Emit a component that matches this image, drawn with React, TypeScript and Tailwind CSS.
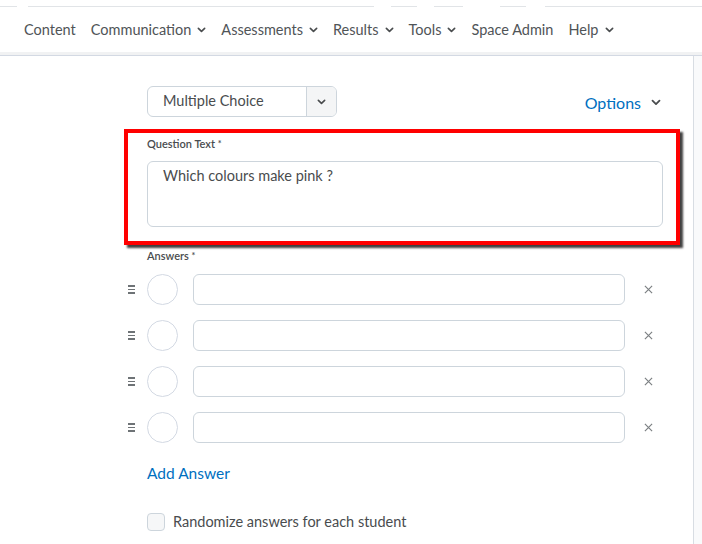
import React from 'react';

const Chevron = ({ className = '' }: { className?: string }) => (
  <svg viewBox="0 0 10 6" className={className} fill="none" stroke="currentColor" strokeWidth={1.8} strokeLinecap="round" strokeLinejoin="round">
    <path d="M1.5 1.2 5 4.6 8.5 1.2" />
  </svg>
);

const navItems: { label: string; menu: boolean }[] = [
  { label: 'Content', menu: false },
  { label: 'Communication', menu: true },
  { label: 'Assessments', menu: true },
  { label: 'Results', menu: true },
  { label: 'Tools', menu: true },
  { label: 'Space Admin', menu: false },
  { label: 'Help', menu: true },
];

const AnswerRow = () => (
  <div className="flex items-center h-[31px]">
    <div className="w-[19px] -ml-[19px] flex flex-col gap-[2px] items-start">
      <span className="block w-[7px] h-[1.5px] bg-[#6e7376]" />
      <span className="block w-[7px] h-[1.5px] bg-[#6e7376]" />
      <span className="block w-[7px] h-[1.5px] bg-[#6e7376]" />
    </div>
    <div className="w-[31px] h-[31px] rounded-full border border-[#d3d9e3] bg-white shrink-0" />
    <div className="ml-[15px] w-[432px] h-[31px] rounded-[6px] border border-[#cdd5dc] bg-white" />
    <svg viewBox="0 0 10 10" className="ml-[19px] w-[9px] h-[9px] text-[#7c8083]" fill="none" stroke="currentColor" strokeWidth={1.3}>
      <path d="M1 1 9 9M9 1 1 9" />
    </svg>
  </div>
);

export default function App() {
  return (
    <div className="w-[702px] h-[544px] overflow-hidden bg-white text-[#494c4e] flex flex-col" style={{ fontFamily: 'Lato, "Open Sans", sans-serif' }}>
      {/* nav */}
      <div className="relative h-[52px] shrink-0">
        <div className="flex h-[12px] items-center gap-[11px] pt-[1px]">
          <span className="block w-[17px] h-[1px] bg-[#e1e4e7]" />
          <span className="block w-[352px] h-[1px] bg-[#e1e4e7]" />
          <span className="block ml-[6px] w-[26px] h-[1px] bg-[#e1e4e7]" />
          <span className="block ml-[6px] w-[30px] h-[1px] bg-[#e1e4e7]" />
          <span className="block ml-[26px] w-[26px] h-[1px] bg-[#e1e4e7]" />
          <span className="block ml-[8px] w-[160px] h-[1px] bg-[#e1e4e7]" />
        </div>
        <div className="flex items-center pl-[24px] pt-[2px] h-[34px] text-[14.5px] text-[#505457]">
          {navItems.map((n) => (
            <div key={n.label} className="flex items-center mr-[15px]">
              <span>{n.label}</span>
              {n.menu && <Chevron className="ml-[6px] w-[9px] h-[6px] text-[#494c4e]" />}
            </div>
          ))}
        </div>
      </div>
      <div className="h-[3px] bg-[#f1f2f3] shrink-0" />
      <div className="h-[1px] bg-[#d3d9e3] shrink-0" />

      {/* body */}
      <div className="flex flex-1 min-h-0">
        <div className="w-[693px] shrink-0 pl-[147px] pt-[30px]">
          <div className="w-[516px]">
            <div className="flex items-center justify-between">
              <div className="flex w-[190px] h-[31px] rounded-[6px] border border-[#cdd5dc] overflow-hidden">
                <div className="flex-1 flex items-center pl-[15px] pb-[1px] text-[14.5px]">Multiple Choice</div>
                <div className="w-[30px] flex items-center justify-center bg-[#f4f5f6] border-l border-[#cdd5dc]">
                  <Chevron className="w-[9px] h-[6px] text-[#494c4e]" />
                </div>
              </div>
              <div className="flex items-center text-[#006fbf] text-[16px] mt-[2px] pr-[2px]">
                <span>Options</span>
                <Chevron className="ml-[10px] w-[10px] h-[7px] text-[#494c4e]" />
              </div>
            </div>

            <div className="mt-[12px] -ml-[23px] w-[556px] border-[4px] border-[#ff0000] shadow-[3px_3px_2px_rgba(0,0,0,0.75)] pl-[19px] pr-[13px] pt-[4px] pb-[14px]">
              <div className="text-[11px] font-semibold leading-[14px]">Question Text <span className="text-[9px] align-top">*</span></div>
              <div className="mt-[10px] h-[66px] rounded-[6px] border border-[#cdd5dc] px-[15px] pt-[3px] text-[14.5px]">Which colours make pink ?</div>
            </div>

            <div className="mt-[4px] text-[11px] font-semibold leading-[14px]">Answers <span className="text-[9px] align-top">*</span></div>

            <div className="mt-[11px] flex flex-col gap-[15px]">
              <AnswerRow />
              <AnswerRow />
              <AnswerRow />
              <AnswerRow />
            </div>

            <div className="mt-[19px] text-[#006fbf] text-[15.5px]">Add Answer</div>

            <div className="mt-[26px] flex items-center">
              <div className="w-[18px] h-[18px] rounded-[4px] border border-[#cdd5dc] bg-[#f6f7f8]" />
              <span className="ml-[8px] text-[14.5px]">Randomize answers for each student</span>
            </div>
          </div>
        </div>
        <div className="w-[1px] bg-[#d8dde3] shrink-0" />
        <div className="flex-1 bg-[#f9fafb]" />
      </div>
    </div>
  );
}
